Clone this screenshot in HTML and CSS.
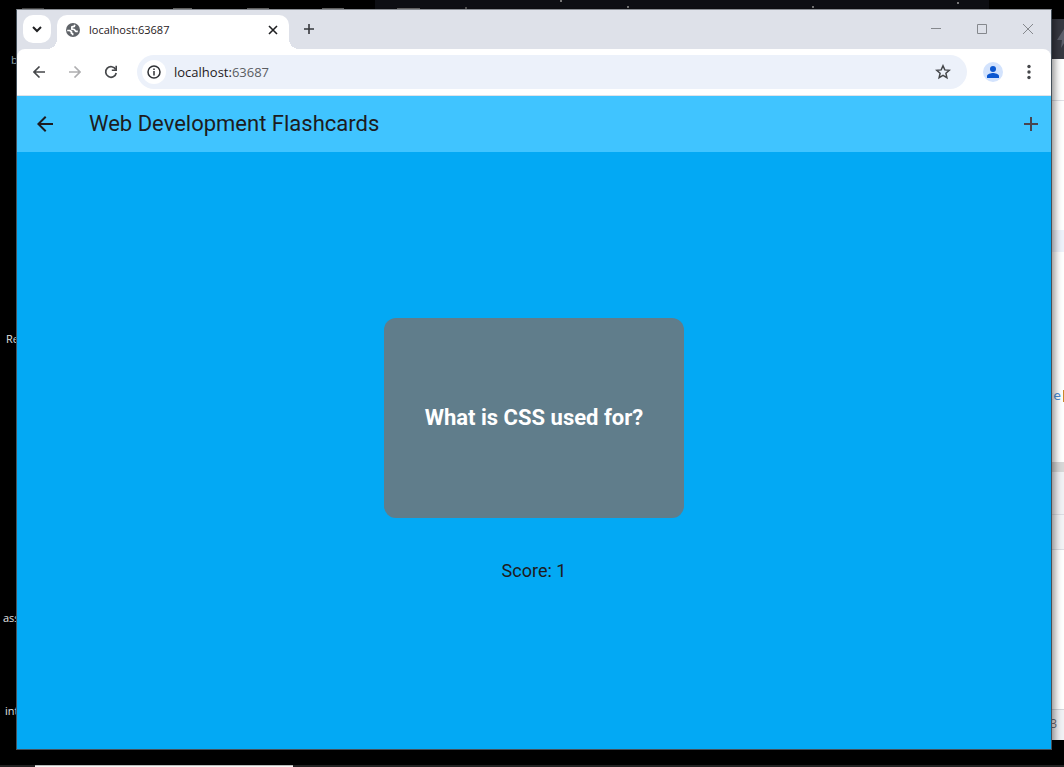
FILE: index.html
```html
<!DOCTYPE html>
<html lang="en">
<head>
<meta charset="utf-8">
<meta name="viewport" content="width=device-width, initial-scale=1">
<title>Web Development Flashcards</title>
<link rel="stylesheet" href="styles.css">
</head>
<body>
<div class="desktop">
  <div class="wallpaper">
    <span class="icon-label label-b">b</span>
    <span class="icon-label label-re">Re</span>
    <span class="icon-label label-ass">ass</span>
    <span class="icon-label label-int">int</span>
    <i class="tile tile-1"></i><i class="tile tile-2"></i><i class="tile tile-3"></i><i class="tile tile-5"></i>
  </div>
  <div class="photo-window"><i class="tile tile-4"></i><i class="star s1"></i><i class="star s2"></i><i class="star s3"></i><i class="star s4"></i><i class="star s5"></i></div>
  <div class="side-window">
    <div class="side-head"><svg width="12" height="20" viewBox="0 0 12 20"><path d="M8 0L1 11h5l-1 8 7-11H8z" fill="#5d606c"/></svg></div>
    <div class="side-row row-tools"></div>
    <div class="side-row row-gap"></div>
    <div class="side-row row-band"></div>
    <div class="side-row row-code"><code class="side-code">te</code></div>
    <div class="side-row row-scroll"></div>
    <div class="side-row row-tab"></div>
    <div class="side-row row-sub"></div>
    <div class="side-row row-rest"></div>
    <div class="side-row row-status">3</div>
  </div>
  <div class="taskbar"><div class="task-active"></div></div>

  <div class="window">
    <header class="tabstrip">
      <button class="tab-search" type="button" aria-label="Search tabs"><svg width="10" height="7" viewBox="0 0 10 7"><path d="M1 1l4 4 4-4" fill="none" stroke="#1f2022" stroke-width="2"/></svg></button>
      <div class="tab">
        <svg width="16" height="16" viewBox="0 0 16 16"><circle cx="8" cy="8" r="7" fill="#5f6368"/><path d="M9.800 2.700L9.300 4.300 6.900 4.800 6.800 7.200 9.300 7.500 10.600 9.300H12.800M2.200 8.500h2.600l1.700 1.300-.2 1.400 1.300.3v1.800" fill="none" stroke="#fff" stroke-width="1.700" stroke-linejoin="round"/></svg>
        <span class="tab-title">localhost:63687</span>
        <button class="tab-close" type="button" aria-label="Close tab"><svg width="10" height="10" viewBox="0 0 10 10"><path d="M1 1l8 8M9 1L1 9" stroke="#1f2022" stroke-width="1.600"/></svg></button>
      </div>
      <button class="new-tab" type="button" aria-label="New tab"><svg width="12" height="12" viewBox="0 0 12 12"><path d="M6 1v10M1 6h10" stroke="#36383c" stroke-width="1.600"/></svg></button>
      <div class="caption">
        <button type="button" aria-label="Minimize"><svg width="10" height="10" viewBox="0 0 10 10"><path d="M0 4.500h10" stroke="#85888d"/></svg></button>
        <button type="button" aria-label="Maximize"><svg width="10" height="10" viewBox="0 0 10 10"><path d="M.5.5h9v9h-9z" fill="none" stroke="#85888d"/></svg></button>
        <button type="button" aria-label="Close"><svg width="12" height="12" viewBox="0 0 12 12"><path d="M1 1l10 10M11 1L1 11" stroke="#85888d"/></svg></button>
      </div>
    </header>
    <div class="toolbar-wrap">
    <nav class="toolbar" aria-label="Browser">
      <button type="button" aria-label="Back"><svg width="12" height="12" viewBox="0 0 12 12"><path d="M12 6H1M6.500.5L1 6l5.500 5.500" fill="none" stroke="#45474a" stroke-width="1.600"/></svg></button>
      <button type="button" aria-label="Forward" disabled><svg width="12" height="12" viewBox="0 0 12 12"><path d="M0 6h11M5.500.5L11 6l-5.500 5.500" fill="none" stroke="#aeaeb0" stroke-width="1.600"/></svg></button>
      <button type="button" aria-label="Reload"><svg width="14" height="14" viewBox="0 0 14 14"><path d="M11.700 4.500A5.300 5.300 0 1 0 12.200 8" fill="none" stroke="#45474a" stroke-width="1.700"/><path d="M12.200.8v4.500H7.800" fill="none" stroke="#45474a" stroke-width="1.600"/></svg></button>
      <div class="omnibox">
        <button class="site-info" type="button" aria-label="Site information"><svg width="14" height="14" viewBox="0 0 14 14"><circle cx="7" cy="7" r="6" fill="none" stroke="#303236" stroke-width="1.500"/><path d="M7 6v4.500M7 3.500V5" stroke="#303236" stroke-width="1.500"/></svg></button>
        <a class="url" href="#">localhost:<span>63687</span></a>
        <button class="bookmark" type="button" aria-label="Bookmark"><svg width="16" height="16" viewBox="0 0 16 16"><path d="M8 1.800l1.800 4.100 4.500.4-3.400 3 1 4.400L8 11.400l-3.900 2.300 1-4.400-3.400-3 4.500-.4z" fill="none" stroke="#45474a" stroke-width="1.500"/></svg></button>
      </div>
      <button class="profile" type="button" aria-label="Profile"><svg width="20" height="20" viewBox="0 0 20 20"><circle cx="10" cy="10" r="10" fill="#d3e3fd"/><circle cx="10" cy="7" r="3" fill="#0b57d0"/><path d="M4 16v-2c0-2 4-3 6-3s6 1 6 3v2z" fill="#0b57d0"/></svg></button>
      <button type="button" aria-label="Menu"><svg width="4" height="16" viewBox="0 0 4 16"><g fill="#45474a"><circle cx="2" cy="2.500" r="1.700"/><circle cx="2" cy="8" r="1.700"/><circle cx="2" cy="13.500" r="1.700"/></g></svg></button>
    </nav>
    </div>
    <div class="appbar">
      <button type="button" aria-label="Go back"><svg width="24" height="24" viewBox="0 0 24 24"><path d="M20 11H7.830l5.590-5.590L12 4l-8 8 8 8 1.410-1.410L7.830 13H20z" fill="#1d1b20"/></svg></button>
      <h1>Web Development Flashcards</h1>
      <button type="button" aria-label="Add flashcard"><svg width="24" height="24" viewBox="0 0 24 24"><path d="M19 13h-6v6h-2v-6H5v-2h6V5h2v6h6z" fill="#49454f"/></svg></button>
    </div>
    <main class="study">
      <button class="flashcard" type="button">What is CSS used for?</button>
      <p class="score">Score: 1</p>
    </main>
  </div>
</div>
</body>
</html>
```
FILE: styles.css
```css
* { box-sizing: border-box; }
body { margin: 0; background: #000; font-family: "Open Sans", "Noto Sans", sans-serif; }
button { border: 0; padding: 0; background: none; font: inherit; color: inherit; display: flex; align-items: center; justify-content: center; flex: none; }
svg { display: block; flex: none; }

.desktop { position: relative; height: 100vh; min-height: 480px; overflow: hidden; background: #000; }
.wallpaper { position: absolute; inset: 0; }
.icon-label { position: absolute; color: #e4e4e4; font-size: 11px; line-height: 16px; }
.label-b { left: 11px; top: 52px; color: #9bb0b4; }
.label-re { left: 6px; top: 331px; }
.label-ass { left: 3px; top: 610px; }
.label-int { left: 5px; top: 703px; }
.tile { position: absolute; top: 8px; height: 1px; background: #6b6b6b; }
.tile-1 { left: 22px; width: 22px; background: #4a4a4a; }
.tile-2 { left: 173px; width: 19px; }
.tile-3 { left: 247px; width: 22px; }
.tile-4 { left: 22px; width: 23px; }
.tile-5 { left: 322px; width: 22px; }
.photo-window { position: absolute; top: 0; left: 375px; right: 75px; height: 10px; background: #0e0f14; }
.star { position: absolute; width: 2px; height: 2px; background: #777; }
.s1 { left: 252px; top: 6px; }
.s2 { left: 185px; top: 0; }
.s3 { left: 437px; top: 6px; }
.s4 { left: 582px; top: 2px; }
.s5 { left: 90px; top: 7px; background: #555; }

.side-window { position: absolute; top: 19px; bottom: 27px; right: 0; width: 60px; display: flex; flex-direction: column; background: #fff; overflow: hidden; }
.side-head { height: 40px; flex: none; background: #363841; display: flex; justify-content: flex-end; padding-top: 10px; }
.side-head svg { margin-right: -4px; }
.side-row { flex: none; }
.row-tools { height: 42px; border-bottom: 1px solid #dfe0e6; }
.row-gap { height: 129px; }
.row-band { height: 22px; background: #eef2fb; }
.row-code { height: 210px; display: flex; align-items: center; justify-content: flex-end; padding-top: 78px; }
.side-code { padding-right: 2px; border-right: 1px solid #c98a2b; font: 13px/12px "DejaVu Sans Mono", monospace; color: #4a90d9; }
.row-scroll { height: 10px; background: #d8d8d8; }
.row-tab { height: 43px; background: #f1f2f5; border-bottom: 1px solid #dcdee4; }
.row-sub { height: 35px; background: #f3f4f6; border-bottom: 1px solid #dcdee4; }
.row-rest { flex: 1; }
.row-status { height: 31px; background: #f1f2f5; border-top: 1px solid #d4d6dc; padding-right: 7px; text-align: right; font-size: 12px; line-height: 28px; color: #6b6e78; }

.taskbar { position: absolute; left: 0; right: 0; bottom: 0; height: 2px; background: #222; }
.task-active { width: 258px; height: 2px; margin-left: 35px; background: #f5f5f3; border-top: 1px solid #bbb; }

.window { position: absolute; inset: 9px 12px 17px 16px; display: flex; flex-direction: column; border: 1px solid #45505a; border-top-color: #898d93; background: #dee1e9; box-shadow: 2px 3px 8px rgba(0, 0, 0, 0.5); }

.tabstrip { display: flex; align-items: flex-start; height: 39px; flex: none; padding: 5px 0 0 6px; background: #dee1e9; }
.tab-search { width: 28px; height: 28px; border-radius: 10px; background: #fff; }
.tab { position: relative; display: flex; align-items: center; width: 232px; height: 34px; margin-left: 6px; padding: 0 8px 5px; border-radius: 10px 10px 0 0; background: #fff; color: #1f2022; }
.tab::before, .tab::after { content: ""; position: absolute; bottom: 0; width: 10px; height: 10px; }
.tab::before { right: 100%; background: radial-gradient(circle at 0 0, transparent 10px, #fff 10px); }
.tab::after { left: 100%; background: radial-gradient(circle at 100% 0, transparent 10px, #fff 10px); }
.tab-title { flex: 1; margin-left: 8px; font-size: 11px; line-height: 16px; }
.tab-close { width: 16px; height: 16px; }
.new-tab { width: 28px; height: 28px; margin-left: 6px; }
.caption { display: flex; margin-left: auto; }
.caption button { width: 46px; height: 28px; }

.toolbar-wrap { background: #dee1e9; flex: none; }
.toolbar { display: flex; align-items: center; height: 47px; padding: 0 4px; border-radius: 8px 8px 0 0; border-bottom: 1px solid #dfe3ea; background: #fff; }
.toolbar > button { width: 36px; height: 34px; }
.omnibox { flex: 1; display: flex; align-items: center; height: 34px; margin: 0 8px; padding: 0 16px 0 5px; border-radius: 17px; background: #ecf1fa; }
.site-info { width: 24px; height: 24px; border-radius: 50%; background: #fff; }
.url { flex: 1; margin-left: 8px; font-size: 13px; line-height: 20px; color: #1f2022; text-decoration: none; }
.url span { color: #5a5d62; }
.bookmark { width: 16px; height: 16px; }

.appbar { display: flex; align-items: center; height: 56px; flex: none; padding: 0 4px; background: #40c4ff; font-family: Roboto, sans-serif; color: #1d1b20; }
.appbar button { width: 48px; height: 48px; }
.appbar button:last-child { margin-right: -8px; }
.appbar h1 { flex: 1; margin: 0 0 0 20px; font-size: 22px; line-height: 28px; font-weight: 400; }

.study { flex: 1; min-height: 0; display: flex; flex-direction: column; align-items: center; justify-content: center; gap: 40px; background: #03a9f4; font-family: Roboto, sans-serif; }
.flashcard { width: 300px; height: 200px; padding: 16px; border-radius: 12px; background: #607d8b; color: #fff; font-size: 22px; line-height: 32px; font-weight: 700; }
.score { margin: 0; font-size: 18px; line-height: 26px; color: #1d1b20; }
```
